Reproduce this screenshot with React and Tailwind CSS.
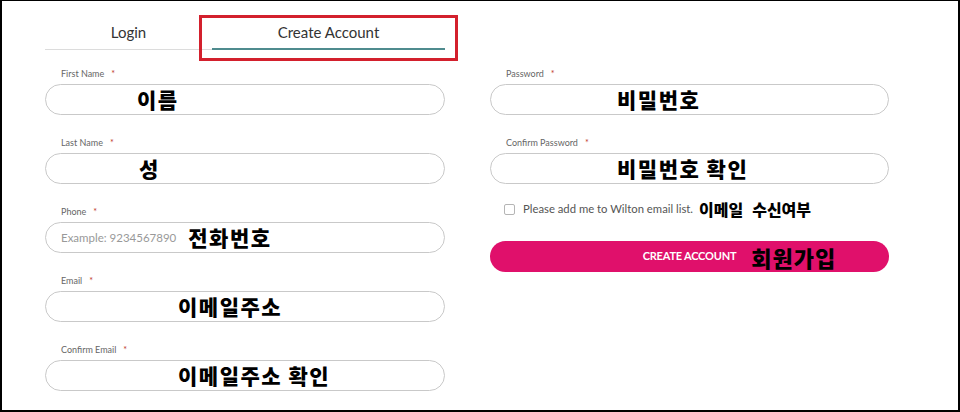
import React from "react";

const KO = { fontFamily: '"Noto Sans CJK KR", "Noto Sans", sans-serif' };
const EN = { fontFamily: 'Lato, "Open Sans", sans-serif' };

function Label({ text }) {
  return (
    <div className="h-[10px] leading-[10px] text-[9px] text-[#666] pl-[16px] mb-[5px] flex items-center" style={EN}>
      <span>{text}</span>
      <span className="ml-[7px] text-[#c0392b]">*</span>
    </div>
  );
}

function Field({ label, children, className = "" }) {
  return (
    <div className={className}>
      <Label text={label} />
      <div className="h-[31px] rounded-full border border-[#c9c9c9] bg-white flex items-center">
        {children}
      </div>
    </div>
  );
}

function Ko({ children, className = "" }) {
  return (
    <span className={"text-[21px] tracking-[1.5px] font-black text-black leading-none whitespace-pre " + className} style={KO}>
      {children}
    </span>
  );
}

export default function App() {
  return (
    <div className="w-[960px] h-[412px] border-2 border-t border-black bg-white relative box-border pt-[16px] pl-[43px]" style={EN}>
      <div className="flex gap-[45px]">
        {/* Left column */}
        <div className="w-[400px] flex flex-col">
          <div className="flex h-[33px] mb-[19px]">
            <div className="w-[167px] border-b border-[#dcdcdc] flex items-center justify-center text-[15px] text-[#333] pb-[1px]">
              Login
            </div>
            <div className="flex-1 border-b-2 border-[#4f8b8e] flex items-center justify-center text-[15px] text-[#333]">
              Create Account
            </div>
          </div>
          <Field label="First Name" className="mb-[23px]">
            <Ko className="ml-[91px]">이름</Ko>
          </Field>
          <Field label="Last Name" className="mb-[23px]">
            <Ko className="ml-[93px]">성</Ko>
          </Field>
          <Field label="Phone" className="mb-[23px]">
            <span className="ml-[15px] text-[11.5px] text-[#999]">Example: 9234567890</span>
            <Ko className="ml-[12px]">전화번호</Ko>
          </Field>
          <Field label="Email" className="mb-[23px]">
            <Ko className="ml-[132px]">이메일주소</Ko>
          </Field>
          <Field label="Confirm Email">
            <Ko className="ml-[132px]">이메일주소 확인</Ko>
          </Field>
        </div>

        {/* Right column */}
        <div className="w-[399px] flex flex-col pt-[52px]">
          <Field label="Password" className="mb-[23px]">
            <Ko className="ml-[126px]">비밀번호</Ko>
          </Field>
          <Field label="Confirm Password">
            <Ko className="ml-[126px]">비밀번호 확인</Ko>
          </Field>
          <div className="flex items-center mt-[19px] pl-[14px] h-[12px]">
            <div className="w-[11px] h-[11px] rounded-[2px] border border-[#b5b5b5] bg-white" />
            <span className="ml-[8px] text-[11.3px] text-[#555]">Please add me to Wilton email list.</span>
            <span className="ml-[6px] text-[16px] font-black text-black leading-none whitespace-pre" style={KO}>이메일</span>
            <span className="ml-[9px] text-[16px] font-black text-black leading-none whitespace-pre" style={KO}>수신여부</span>
          </div>
          <div className="mt-[26px] h-[31px] rounded-full bg-[#e0106b] flex items-center justify-center">
            <span className="relative text-[11px] font-bold text-white tracking-[-0.2px]">
              CREATE ACCOUNT
              <span className="absolute left-full top-1/2 -translate-y-1/2 ml-[15px] text-[22px] tracking-[1px] font-black text-black whitespace-pre leading-none" style={KO}>
                회원가입
              </span>
            </span>
          </div>
        </div>
      </div>

      {/* Red annotation box */}
      <div className="absolute left-[197px] top-[14px] w-[259px] h-[46px] border-[3px] border-[#d3202d] pointer-events-none" />
    </div>
  );
}
